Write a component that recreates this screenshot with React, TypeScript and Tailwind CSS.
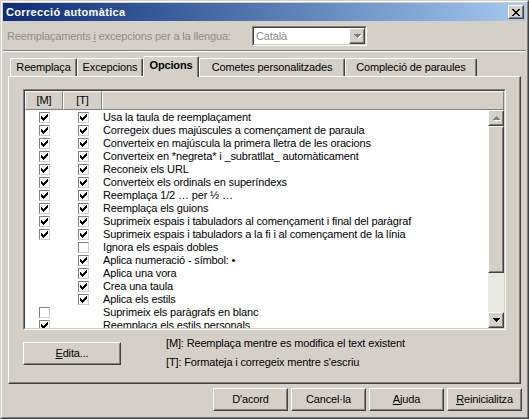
import React from "react";

const CHECK = [
  "......X",
  ".....XX",
  "X...XXX",
  "XX.XXX.",
  "XXXXX..",
  ".XXX...",
  "..X....",
];
const DOWN = ["XXXXXXX", ".XXXXX.", "..XXX..", "...X..."];
const UP = ["...X...", "..XXX..", ".XXXXX.", "XXXXXXX"];
const CLOSE = [
  "XX....XX",
  ".XX..XX.",
  "..XXXX..",
  "...XX...",
  "..XXXX..",
  ".XX..XX.",
  "XX....XX",
];

function Pixels({ rows, color }: { rows: string[]; color: string }) {
  const w = rows[0].length;
  const h = rows.length;
  return (
    <svg width={w} height={h} viewBox={`0 0 ${w} ${h}`} shapeRendering="crispEdges" className="block">
      {rows.flatMap((r, y) =>
        r.split("").map((c, x) =>
          c === "X" ? <rect key={`${x}-${y}`} x={x} y={y} width={1} height={1} fill={color} /> : null
        )
      )}
    </svg>
  );
}

function DisabledArrow({ rows }: { rows: string[] }) {
  return (
    <div className="relative">
      <div className="absolute left-[1px] top-[1px]">
        <Pixels rows={rows} color="#ffffff" />
      </div>
      <div className="relative">
        <Pixels rows={rows} color="#808080" />
      </div>
    </div>
  );
}

function Raised({ className, children }: { className?: string; children?: React.ReactNode }) {
  return (
    <div className={"border border-t-white border-l-white border-r-[#404040] border-b-[#404040] bg-[#d4d0c8] " + (className ?? "")}>
      <div className="h-full w-full border border-t-[#d4d0c8] border-l-[#d4d0c8] border-r-[#808080] border-b-[#808080] flex items-center justify-center">
        {children}
      </div>
    </div>
  );
}

function Check({ checked }: { checked: boolean }) {
  return (
    <div className="w-[11px] h-[11px] border border-t-[#808080] border-l-[#808080] border-r-[#d4d0c8] border-b-[#d4d0c8] bg-white flex items-center justify-center">
      {checked && <Pixels rows={CHECK} color="#000000" />}
    </div>
  );
}

// 0 = none, 1 = unchecked, 2 = checked
const ROWS: [string, number, number][] = [
  ["Usa la taula de reemplaçament", 2, 2],
  ["Corregeix dues majúscules a començament de paraula", 2, 2],
  ["Converteix en majúscula la primera lletra de les oracions", 2, 2],
  ["Converteix en *negreta* i _subratllat_ automàticament", 2, 2],
  ["Reconeix els URL", 2, 2],
  ["Converteix els ordinals en superíndexs", 2, 2],
  ["Reemplaça 1/2 … per ½ …", 2, 2],
  ["Reemplaça els guions", 2, 2],
  ["Suprimeix espais i tabuladors al començament i final del paràgraf", 2, 2],
  ["Suprimeix espais i tabuladors a la fi i al començament de la línia", 2, 2],
  ["Ignora els espais dobles", 0, 1],
  ["Aplica numeració - símbol: •", 0, 2],
  ["Aplica una vora", 0, 2],
  ["Crea una taula", 0, 2],
  ["Aplica els estils", 0, 2],
  ["Suprimeix els paràgrafs en blanc", 1, 0],
  ["Reemplaça els estils personals", 2, 0],
];

function Tab({ label, w, selected }: { label: string; w: string; selected?: boolean }) {
  if (selected) {
    return (
      <div
        className={
          "relative z-10 h-[21px] -mb-px bg-[#d4d0c8] border-t border-l border-t-white border-l-white border-r border-r-[#404040] shadow-[inset_-1px_0_#808080] rounded-tl-[2px] rounded-tr-[2px] flex items-start justify-center pt-[2px] font-bold " +
          w
        }
      >
        {label}
      </div>
    );
  }
  return (
    <div
      className={
        "h-[18px] bg-[#d4d0c8] border-t border-l border-t-white border-l-white border-r border-r-[#404040] shadow-[inset_-1px_0_#808080] rounded-tl-[2px] rounded-tr-[2px] flex items-start justify-center pt-[2px] " +
        w
      }
    >
      {label}
    </div>
  );
}

function HeaderCell({ className, children }: { className?: string; children?: React.ReactNode }) {
  return (
    <div className={"h-full border border-t-white border-l-white border-r-[#808080] border-b-[#808080] flex items-center justify-center " + (className ?? "")}>
      {children}
    </div>
  );
}

export default function App() {
  return (
    <div className="w-[529px] h-[419px] bg-[#d4d0c8] border border-t-[#d4d0c8] border-l-[#d4d0c8] border-r-[#404040] border-b-[#404040] font-['Liberation_Sans',Arial,sans-serif] text-[11px] leading-[13px] text-black tracking-[-0.15px] overflow-hidden">
      <div className="h-full w-full border border-t-white border-l-white border-r-[#808080] border-b-[#808080] p-px flex flex-col">
        {/* Title bar */}
        <div className="h-[18px] shrink-0 bg-linear-to-r from-[#0e2c74] to-[#a6caf0] flex items-center justify-between pl-[3px] pr-[2px]">
          <span className="text-white font-bold tracking-[0.35px]">Correcció automàtica</span>
          <Raised className="w-[16px] h-[14px]">
            <Pixels rows={CLOSE} color="#000000" />
          </Raised>
        </div>

        {/* Language row */}
        <div className="mt-[5px] flex items-center pl-[4px] shrink-0">
          <span className="w-[245px] text-[#8c8c8c] whitespace-nowrap">
            Reemplaçaments <span className="underline">i</span> excepcions per a la llengua:
          </span>
          <div className="w-[115px] h-[20px] border border-t-[#808080] border-l-[#808080] border-r-white border-b-white">
            <div className="h-full w-full border border-t-[#404040] border-l-[#404040] border-r-[#d4d0c8] border-b-[#d4d0c8] bg-white flex items-center">
              <span className="flex-1 pl-[2px] text-[#8c8c8c]">Català</span>
              <Raised className="w-[16px] h-[16px]">
                <DisabledArrow rows={DOWN} />
              </Raised>
            </div>
          </div>
        </div>

        {/* Separator */}
        <div className="mt-[4px] h-[2px] shrink-0 border-t border-t-[#808080] border-b border-b-white" />

        {/* Tabs */}
        <div className="mt-[4px] h-[20px] shrink-0 flex items-end pl-[7px]">
          <Tab label="Reemplaça" w="w-[67px]" />
          <Tab label="Excepcions" w="w-[66px]" />
          <Tab label="Opcions" w="w-[56px]" selected />
          <Tab label="Cometes personalitzades" w="w-[146px]" />
          <Tab label="Compleció de paraules" w="w-[132px]" />
        </div>

        {/* Panel */}
        <div className="ml-[5px] w-[513px] h-[308px] shrink-0 border-t border-l border-t-white border-l-white border-r border-b border-r-[#404040] border-b-[#404040] shadow-[inset_-1px_-1px_#808080] pt-[12px] pl-[14px] flex flex-col">
          {/* List */}
          <div className="w-[483px] h-[241px] shrink-0 border border-t-[#808080] border-l-[#808080] border-r-white border-b-white">
            <div className="h-full w-full border border-t-[#404040] border-l-[#404040] border-r-[#d4d0c8] border-b-[#d4d0c8] bg-white flex flex-col">
              <div className="h-[19px] shrink-0 flex bg-[#d4d0c8]">
                <HeaderCell className="w-[38px]">[M]</HeaderCell>
                <HeaderCell className="w-[39px]">[T]</HeaderCell>
                <HeaderCell className="flex-1" />
              </div>
              <div className="flex-1 flex min-h-0">
                <div className="flex-1 overflow-hidden pt-[1px]">
                  {ROWS.map(([text, m, t], i) => (
                    <div key={i} className="h-[13px] flex items-center">
                      <div className="w-[14px] shrink-0" />
                      <div className="w-[11px] shrink-0">{m ? <Check checked={m === 2} /> : null}</div>
                      <div className="w-[28px] shrink-0" />
                      <div className="w-[11px] shrink-0">{t ? <Check checked={t === 2} /> : null}</div>
                      <div className="w-[14px] shrink-0" />
                      <span className="whitespace-nowrap">{text}</span>
                    </div>
                  ))}
                </div>
                {/* Scrollbar */}
                <div className="w-[16px] shrink-0 flex flex-col">
                  <Raised className="w-[16px] h-[16px] shrink-0">
                    <DisabledArrow rows={UP} />
                  </Raised>
                  <Raised className="w-[16px] h-[147px] shrink-0" />
                  <div className="flex-1 bg-[#ebe9e4]" />
                  <Raised className="w-[16px] h-[16px] shrink-0">
                    <Pixels rows={DOWN} color="#000000" />
                  </Raised>
                </div>
              </div>
            </div>
          </div>

          {/* Edit + legend */}
          <div className="mt-[7px] flex items-start">
            <Raised className="mt-[5px] w-[98px] h-[23px] shrink-0">
              <span>
                <span className="underline">E</span>dita...
              </span>
            </Raised>
            <div className="ml-[45px] flex flex-col gap-[6px]">
              <span className="whitespace-nowrap">[M]: Reemplaça mentre es modifica el text existent</span>
              <span className="whitespace-nowrap">[T]: Formateja i corregeix mentre s'escriu</span>
            </div>
          </div>
        </div>

        {/* Bottom buttons */}
        <div className="mt-[4px] flex justify-end gap-[3px] pr-[4px]">
          <Raised className="w-[75px] h-[23px]">D'acord</Raised>
          <Raised className="w-[75px] h-[23px]">Cancel·la</Raised>
          <Raised className="w-[75px] h-[23px]">
            <span>
              <span className="underline">A</span>juda
            </span>
          </Raised>
          <Raised className="w-[75px] h-[23px]">
            <span>
              <span className="underline">R</span>einicialitza
            </span>
          </Raised>
        </div>
      </div>
    </div>
  );
}
